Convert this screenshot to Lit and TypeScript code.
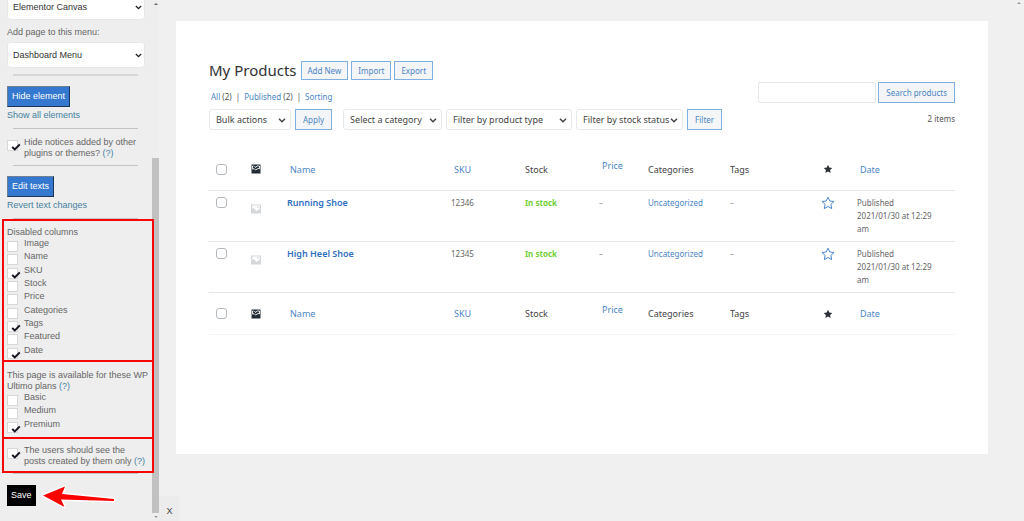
import { LitElement, html, svg, css } from "lit";
import { customElement } from "lit/decorators.js";

const chevron = html`<svg class="chev" viewBox="0 0 8 5" aria-hidden="true"><path d="M1 .8 4 3.8 7 .8" fill="none" stroke="currentColor" stroke-width="1.5"/></svg>`;

const picture = html`<svg class="pic" viewBox="0 0 10 10" aria-hidden="true"><path fill="currentColor" fill-rule="evenodd" d="M0 .5h10v9H0zM1.300 1.600v3.400l1.400-1 2.600 3 3.400-2.200V1.600zM6 2.200h1.500v1.500H6z"/></svg>`;

const darkPicture = html`<svg class="pic" viewBox="0 0 10 10" aria-hidden="true"><path fill="currentColor" d="M.5.5h9v9h-9z"/><path fill="none" stroke="#fff" stroke-width=".9" d="M1.500 4.800V2h1M3.500 2l1 1.500L6.200 2h2.300v2.800L7 4.500 4.500 6 3 4.500l-1.500.8"/></svg>`;

const starPath = svg`<path d="M7 1.2 8.8 5l4.2.5-3.1 2.9.8 4.2L7 10.5l-3.700 2.100.8-4.200L1 5.500l4.200-.5z"/>`;

@customElement("app-root")
export class AppRoot extends LitElement {
  static styles = css`
    :host {
      display: flex;
      align-items: stretch;
      min-height: 100vh;
      background: #f0f0f0;
      overflow: hidden;
      font-family: "Noto Sans", "Open Sans", sans-serif;
      font-size: 8px;
      color: #555;
    }
    * { box-sizing: border-box; }
    a { color: #4a86c5; text-decoration: none; }
    button, select, input { font: inherit; margin: 0; }
    button { cursor: pointer; }

    /* sidebar */
    .side {
      position: relative;
      display: flex;
      flex: none;
      width: 159px;
      height: 100vh;
      background: #eee;
      font-family: "Liberation Sans", Arial, sans-serif;
      font-size: 9px;
      color: #666;
      line-height: 11px;
    }
    .options {
      display: flex;
      flex-direction: column;
      flex: none;
      width: 152px;
      padding: 0 7px;
      margin-top: -6px;
    }
    .side a { color: #4682a0; }
    .pick { position: relative; display: block; }
    .pick select {
      appearance: none;
      display: block;
      width: 100%;
      border: 1px solid #e8e8e8;
      border-radius: 3px;
      background: #fff;
      font-size: 9px;
    }
    .side .pick select { height: 26px; padding: 0 5px; color: #333; }
    .chev {
      position: absolute;
      right: 3px;
      top: 50%;
      width: 7px;
      height: 5px;
      margin-top: -2px;
      color: #222;
      pointer-events: none;
    }
    .caption { display: block; margin: 7px 0 4px; }
    .options hr {
      width: 125px;
      height: 1px;
      margin: 0 6px;
      border: 0;
      background: #c4c4c4;
      flex: none;
    }
    .options hr.wide { height: 2px; background: #d8d8d8; margin-top: 6px; }
    .blue, .save {
      align-self: flex-start;
      height: 21px;
      padding: 0 4px;
      border: 1px solid #6f7f92;
      border-right-color: #1d3658;
      border-bottom-color: #1d3658;
      background: #3478cf;
      color: #fff;
      line-height: 19px;
    }
    .blue { margin: 10px 0 3px; }
    .save { margin-top: 11px; padding: 0 3px; background: #000; border-color: #000; }
    .after { margin-bottom: 7px; }
    .check { position: relative; display: flex; align-items: flex-start; }
    .check input {
      appearance: none;
      flex: none;
      width: 11px;
      height: 11px;
      margin: 3px 6px -2px 0;
      border: 1px solid #d8d8d8;
      background: #fff;
    }
    .tick {
      position: absolute;
      left: 4px;
      top: 6px;
      width: 10px;
      height: 8px;
      display: none;
      pointer-events: none;
    }
    .check input:checked + .tick { display: block; }
    .notice { margin: 8px 0 6px; }
    .marked {
      position: relative;
      z-index: 1;
      width: 152px;
      margin: 0 -5px;
      padding: 0 3px;
      border: 2px solid #f50808;
    }
    .marked + .marked { margin-top: -2px; }
    .marked p { margin: 0; }
    .columns { padding-top: 6px; padding-bottom: 2px; }
    .plans { padding-top: 8px; padding-bottom: 5px; }
    .owner { padding-top: 6px; padding-bottom: 4px; }
    .list { display: grid; grid-auto-rows: 1fr; height: 120px; }
    .list.short { height: 40px; }
    .rail {
      display: flex;
      flex-direction: column;
      align-items: center;
      width: 7px;
      height: 100%;
      padding: 3px 0;
    }
    .up, .down { width: 0; height: 0; border: 2px solid transparent; border-top: 0; border-bottom: 2px solid #666; }
    .down { border-top: 2px solid #999; border-bottom: 0; margin-top: 3px; }
    .thumb { width: 7px; height: 69%; margin-top: auto; background: #c1c1c1; }
    .arrow {
      position: absolute;
      left: 38px;
      top: 482px;
      width: 80px;
      height: 30px;
      z-index: 2;
    }
    .close {
      align-self: flex-end;
      flex: none;
      width: 20px;
      height: 25px;
      margin-right: -20px;
      padding: 4px 0 0 1px;
      border: 0;
      background: #ececec;
      color: #444;
      font-family: "Liberation Sans", Arial, sans-serif;
      font-size: 9px;
    }

    /* main panel */
    .panel {
      flex: 1;
      min-width: 0;
      align-self: flex-start;
      margin: 21px 36px 0 17px;
      padding: 40px 33px 119px;
      background: #fff;
    }
    .head { display: flex; justify-content: space-between; }
    .title { display: flex; align-items: center; gap: 3px; height: 19px; }
    h1 { margin: 0 1px 0 0; font-size: 15px; font-weight: 400; line-height: 19px; color: #333; }
    .btn {
      display: inline-flex;
      align-items: center;
      justify-content: center;
      height: 21px;
      padding: 0 7px;
      border: 1px solid #7fb0df;
      background: #f3f5f6;
      color: #4a86c5;
      white-space: nowrap;
    }
    .title .btn { height: 19px; padding: 0 6px; }
    .views { display: flex; gap: 4px; margin: 10px 0 6px 2px; line-height: 13px; }
    .filters { display: flex; gap: 4px; }
    .filters .pick select { height: 21px; padding: 0 6px; color: #444; }
    .filters .chev { right: 5px; width: 8px; color: #444; }
    .w1 { width: 82px; }
    .w2 { width: 99px; margin-left: 7px; }
    .w3 { width: 126px; }
    .w4 { width: 107px; }
    .find { display: flex; flex-direction: column; align-items: flex-end; padding-top: 21px; }
    .find form { display: flex; gap: 2px; }
    .find input { width: 118px; height: 21px; border: 1px solid #e6e6e6; border-radius: 2px; background: #fff; }
    .count { margin-top: 9px; line-height: 13px; }

    table { width: 100%; margin-top: 18px; border-collapse: collapse; table-layout: fixed; }
    th, td { padding: 5px 0 6px 3px; text-align: left; vertical-align: top; font-weight: 400; line-height: 13px; white-space: nowrap; }
    th { height: 42px; vertical-align: middle; padding: 1px 0 0 3px; font-size: 9px; color: #444; }
    th.sort { padding-left: 6px; }
    th.raised { padding-bottom: 8px; }
    tbody tr, tfoot tr { border-top: 1px solid #e6e6e6; }
    tfoot tr { border-bottom: 1px solid #f4f4f4; }
    td { color: #666; }
    td .none { color: #999; }
    td.name { font-size: 9px; font-weight: 600; }
    td.name a { color: #2f6fc0; }
    td .stock { color: #6fd033; font-weight: 700; }
    td.date { white-space: normal; }
    .box {
      appearance: none;
      display: block;
      width: 11px;
      height: 11px;
      margin: 0 0 0 4px;
      border: 1px solid #b4b9be;
      border-radius: 3px;
      background: #fff;
    }
    td .box { margin-top: 1px; }
    .pic { display: block; width: 10px; height: 10px; margin-left: 4px; color: #222b33; }
    td .pic { margin-top: 8px; color: #d5d8da; }
    .star { display: block; width: 10px; height: 10px; margin-left: 2px; fill: #2c3238; }
    .open { display: block; width: 14px; height: 14px; fill: none; stroke: #4a86c5; stroke-width: 1; }
    .c0 { width: 35px; } .c1 { width: 40px; } .c2 { width: 164px; } .c3 { width: 74px; }
    .c4 { width: 74px; } .c5 { width: 49px; } .c6 { width: 82px; } .c7 { width: 91px; }
    .c8 { width: 36px; } .c9 { width: 101px; }
    .pageup {
      position: absolute;
      right: 3px;
      top: 2px;
      border: 2px solid transparent;
      border-top: 0;
      border-bottom: 2px solid #999;
    }
  `;

  private check(label: unknown, on = false, cls = "") {
    return html`<label class="check ${cls}">
      <input type="checkbox" .checked=${on} />
      <svg class="tick" viewBox="0 0 10 8" aria-hidden="true"><path d="M1.200 4 3.800 6.400 8.800 1.400" fill="none" stroke="#15151f" stroke-width="2"/></svg>
      <span>${label}</span>
    </label>`;
  }

  private pick(text: string, label: string, cls = "") {
    return html`<span class="pick ${cls}"><select aria-label=${label}><option>${text}</option></select>${chevron}</span>`;
  }

  private headings() {
    return html`<tr>
      <th><input class="box" type="checkbox" aria-label="Select all" /></th>
      <th>${darkPicture}</th>
      <th class="sort"><a href="#">Name</a></th>
      <th class="sort"><a href="#">SKU</a></th>
      <th>Stock</th>
      <th class="sort raised"><a href="#">Price</a></th>
      <th>Categories</th>
      <th>Tags</th>
      <th><svg class="star" viewBox="0 0 14 14" aria-hidden="true">${starPath}</svg></th>
      <th class="sort"><a href="#">Date</a></th>
    </tr>`;
  }

  private product(name: string, sku: string) {
    return html`<tr>
      <td><input class="box" type="checkbox" aria-label="Select ${name}" /></td>
      <td>${picture}</td>
      <td class="name"><a href="#">${name}</a></td>
      <td>${sku}</td>
      <td><span class="stock">In stock</span></td>
      <td><span class="none">–</span></td>
      <td><a href="#">Uncategorized</a></td>
      <td><span class="none">–</span></td>
      <td><svg class="open" viewBox="0 0 14 14" aria-hidden="true">${starPath}</svg></td>
      <td class="date">Published<br />2021/01/30 at 12:29<br />am</td>
    </tr>`;
  }

  render() {
    const columns: [string, boolean][] = [
      ["Image", false], ["Name", false], ["SKU", true], ["Stock", false], ["Price", false],
      ["Categories", false], ["Tags", true], ["Featured", false], ["Date", true],
    ];
    const plans: [string, boolean][] = [["Basic", false], ["Medium", false], ["Premium", true]];
    const help = html`<a href="#">(?)</a>`;
    return html`
      <aside class="side">
        <div class="options">
          ${this.pick("Elementor Canvas", "Page template")}
          <label class="caption" for="menu">Add page to this menu:</label>
          <span class="pick"><select id="menu"><option>Dashboard Menu</option></select>${chevron}</span>
          <hr class="wide" />
          <button class="blue">Hide element</button>
          <a class="after" href="#">Show all elements</a>
          <hr />
          ${this.check(html`Hide notices added by other plugins or themes? ${help}`, true, "notice")}
          <hr />
          <button class="blue">Edit texts</button>
          <a class="after" href="#">Revert text changes</a>
          <hr />
          <section class="marked columns">
            <p>Disabled columns</p>
            <div class="list">${columns.map(([t, on]) => this.check(t, on))}</div>
          </section>
          <section class="marked plans">
            <p>This page is available for these WP Ultimo plans ${help}</p>
            <div class="list short">${plans.map(([t, on]) => this.check(t, on))}</div>
          </section>
          <section class="marked owner">
            ${this.check(html`The users should see the posts created by them only ${help}`, true)}
          </section>
          <hr />
          <button class="save">Save</button>
        </div>
        <div class="rail"><span class="up"></span><span class="thumb"></span><span class="down"></span></div>
        <svg class="arrow" viewBox="0 0 80 30" aria-hidden="true">
          <path d="M5 13.500 27 4.500 24 12 76 17v2l-53-1.500 3.500 7.500z" fill="#f00" stroke="#fff" stroke-width="3" stroke-linejoin="round" paint-order="stroke"/>
        </svg>
      </aside>
      <button class="close" aria-label="Close">X</button>
      <main class="panel">
        <div class="head">
          <div>
            <div class="title">
              <h1>My Products</h1>
              <a class="btn" href="#">Add New</a><a class="btn" href="#">Import</a><a class="btn" href="#">Export</a>
            </div>
            <nav class="views">
              <span><a href="#">All</a> (2)</span><span>|</span><span><a href="#">Published</a> (2)</span><span>|</span><a href="#">Sorting</a>
            </nav>
            <div class="filters">
              ${this.pick("Bulk actions", "Bulk actions", "w1")}
              <button class="btn">Apply</button>
              ${this.pick("Select a category", "Category", "w2")}
              ${this.pick("Filter by product type", "Product type", "w3")}
              ${this.pick("Filter by stock status", "Stock status", "w4")}
              <button class="btn">Filter</button>
            </div>
          </div>
          <div class="find">
            <form><input type="search" aria-label="Search products" /><button type="button" class="btn">Search products</button></form>
            <span class="count">2 items</span>
          </div>
        </div>
        <table>
          <colgroup>${[0, 1, 2, 3, 4, 5, 6, 7, 8, 9].map((n) => html`<col class="c${n}" />`)}</colgroup>
          <thead>${this.headings()}</thead>
          <tbody>${this.product("Running Shoe", "12346")}${this.product("High Heel Shoe", "12345")}</tbody>
          <tfoot>${this.headings()}</tfoot>
        </table>
      </main>
      <span class="pageup"></span>
    `;
  }
}
